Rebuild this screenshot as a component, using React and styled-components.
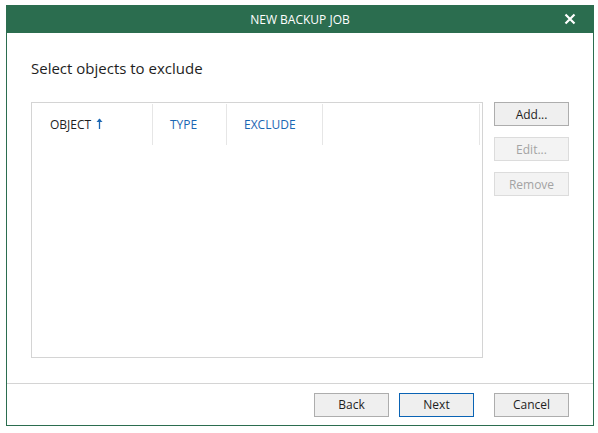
import React from "react";
import styled, { createGlobalStyle } from "styled-components";

const Global = createGlobalStyle`
  html, body { margin: 0; padding: 0; background: #ffffff; }
  body { font-family: "Open Sans", "Noto Sans", "Liberation Sans", sans-serif; }
  * { box-sizing: border-box; }
`;

const Window = styled.div`
  margin: 5px 0 0 6px;
  width: 588px;
  height: 421px;
  display: flex;
  flex-direction: column;
  border: 1px solid #2b6d4f;
  border-top: none;
  background: #fff;
`;

const TitleBar = styled.div`
  height: 28px;
  margin: 0 -1px;
  background: #2b6d4f;
  color: #fff;
  display: flex;
  align-items: center;
  justify-content: center;
  position: relative;
  font-size: 12px;
`;

const CloseBtn = styled.div`
  position: absolute;
  right: 18px;
  top: 8px;
  width: 12px;
  height: 12px;
  display: flex;
`;

const Body = styled.div`
  flex: 1;
  display: flex;
  flex-direction: column;
  padding: 0 24px;
`;

const Heading = styled.div`
  font-size: 15px;
  color: #1e1e1e;
  margin-top: 25px;
  height: 20px;
  line-height: 20px;
`;

const Main = styled.div`
  display: flex;
  gap: 11px;
  margin-top: 24px;
`;

const Table = styled.div`
  width: 452px;
  height: 256px;
  border: 1px solid #d4d4d4;
  display: flex;
  flex-direction: column;
`;

const HeaderRow = styled.div`
  display: flex;
  height: 41px;
  margin-top: 1px;
`;

const HeadCell = styled.div`
  width: ${(p) => p.w}px;
  border-right: 1px solid #e6e6e6;
  display: flex;
  align-items: center;
  padding-left: ${(p) => p.pl || 17}px;
  font-size: 12px;
  color: ${(p) => (p.active ? "#1e1e1e" : "#1a66b3")};
  gap: 5px;
`;

const SortIcon = styled.svg`
  width: 7px;
  height: 11px;
  margin-top: -3px;
`;

const SideButtons = styled.div`
  display: flex;
  flex-direction: column;
  gap: 11px;
`;

const Button = styled.div`
  width: 75px;
  height: 24px;
  display: flex;
  align-items: center;
  justify-content: center;
  font-size: 12px;
  background: ${(p) => (p.disabled ? "#f3f3f3" : "#efefef")};
  border: 1px solid
    ${(p) => (p.primary ? "#0a63b4" : p.disabled ? "#dcdcdc" : "#adadad")};
  color: ${(p) => (p.disabled ? "#a3a3a3" : "#1e1e1e")};
`;

const Footer = styled.div`
  height: 42px;
  border-top: 1px solid #d4d4d4;
  display: flex;
  align-items: center;
  justify-content: flex-end;
  padding-right: 24px;
`;

const FooterGroup = styled.div`
  display: flex;
  gap: 10px;
  margin-right: 20px;
`;

export default function App() {
  return (
    <>
      <Global />
      <Window>
        <TitleBar>
          NEW BACKUP JOB
          <CloseBtn>
            <svg width="12" height="12" viewBox="0 0 12 12">
              <path d="M1.5 1.5 L10.5 10.5 M10.5 1.5 L1.5 10.5" stroke="#fff" strokeWidth="2.2" />
            </svg>
          </CloseBtn>
        </TitleBar>
        <Body>
          <Heading>Select objects to exclude</Heading>
          <Main>
            <Table>
              <HeaderRow>
                <HeadCell w={121} pl={18} active>
                  OBJECT
                  <SortIcon viewBox="0 0 7 11">
                    <path d="M3.5 1 V11" stroke="#1a66b3" strokeWidth="1.3" />
                    <path d="M0.5 4 L3.5 0.5 L6.5 4 Z" fill="#1a66b3" />
                  </SortIcon>
                </HeadCell>
                <HeadCell w={74}>TYPE</HeadCell>
                <HeadCell w={96}>EXCLUDE</HeadCell>
                <HeadCell w={157} />
              </HeaderRow>
            </Table>
            <SideButtons>
              <Button>Add...</Button>
              <Button disabled>Edit...</Button>
              <Button disabled>Remove</Button>
            </SideButtons>
          </Main>
        </Body>
        <Footer>
          <FooterGroup>
            <Button>Back</Button>
            <Button primary>Next</Button>
          </FooterGroup>
          <Button>Cancel</Button>
        </Footer>
      </Window>
    </>
  );
}
